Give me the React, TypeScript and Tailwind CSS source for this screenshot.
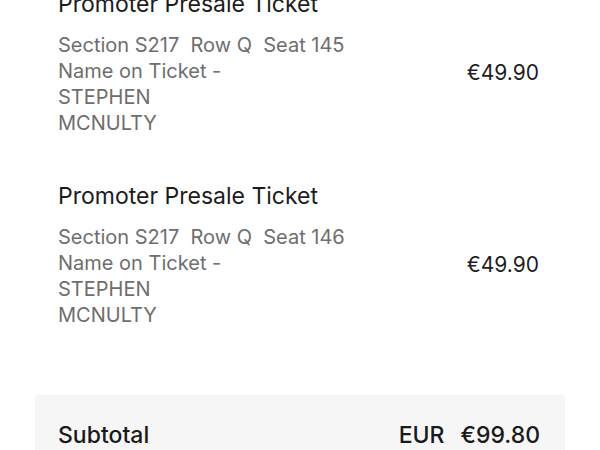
import React from "react";

const tickets = [
  { seat: "145", price: "€49.90" },
  { seat: "146", price: "€49.90" },
];

const TicketRow = ({ seat, price }: { seat: string; price: string }) => (
  <div className="flex justify-between pl-[58px] pr-[61px]">
    <div>
      <h3 className="text-[23px] leading-[28px] text-[#1c1c1c]">Promoter Presale Ticket</h3>
      <div className="mt-[14px] text-[20px] leading-[26px] text-[#6e6e6e]">
        <p className="whitespace-pre">Section S217  Row Q  Seat {seat}</p>
        <p>Name on Ticket -</p>
        <p>STEPHEN</p>
        <p>MCNULTY</p>
      </div>
    </div>
    <div className="mt-[69px] text-[21px] leading-[28px] text-[#1e1e1e]">{price}</div>
  </div>
);

const App = () => (
  <div className="w-[600px] h-[450px] overflow-hidden bg-white font-['Inter','Noto_Sans',sans-serif]">
    <div className="-mt-[10px] flex flex-col gap-[46px]">
      {tickets.map((t) => (
        <TicketRow key={t.seat} {...t} />
      ))}
    </div>
    <div className="mx-[35px] mt-[67px] bg-[#f6f6f6] pl-[23px] pr-[25px] pt-[26px] pb-[20px]">
      <div className="flex justify-between text-[23px] leading-[28px] font-medium text-[#1a1a1a]">
        <span>Subtotal</span>
        <div className="flex gap-[16px]">
          <span>EUR</span>
          <span>€99.80</span>
        </div>
      </div>
    </div>
  </div>
);

export default App;
